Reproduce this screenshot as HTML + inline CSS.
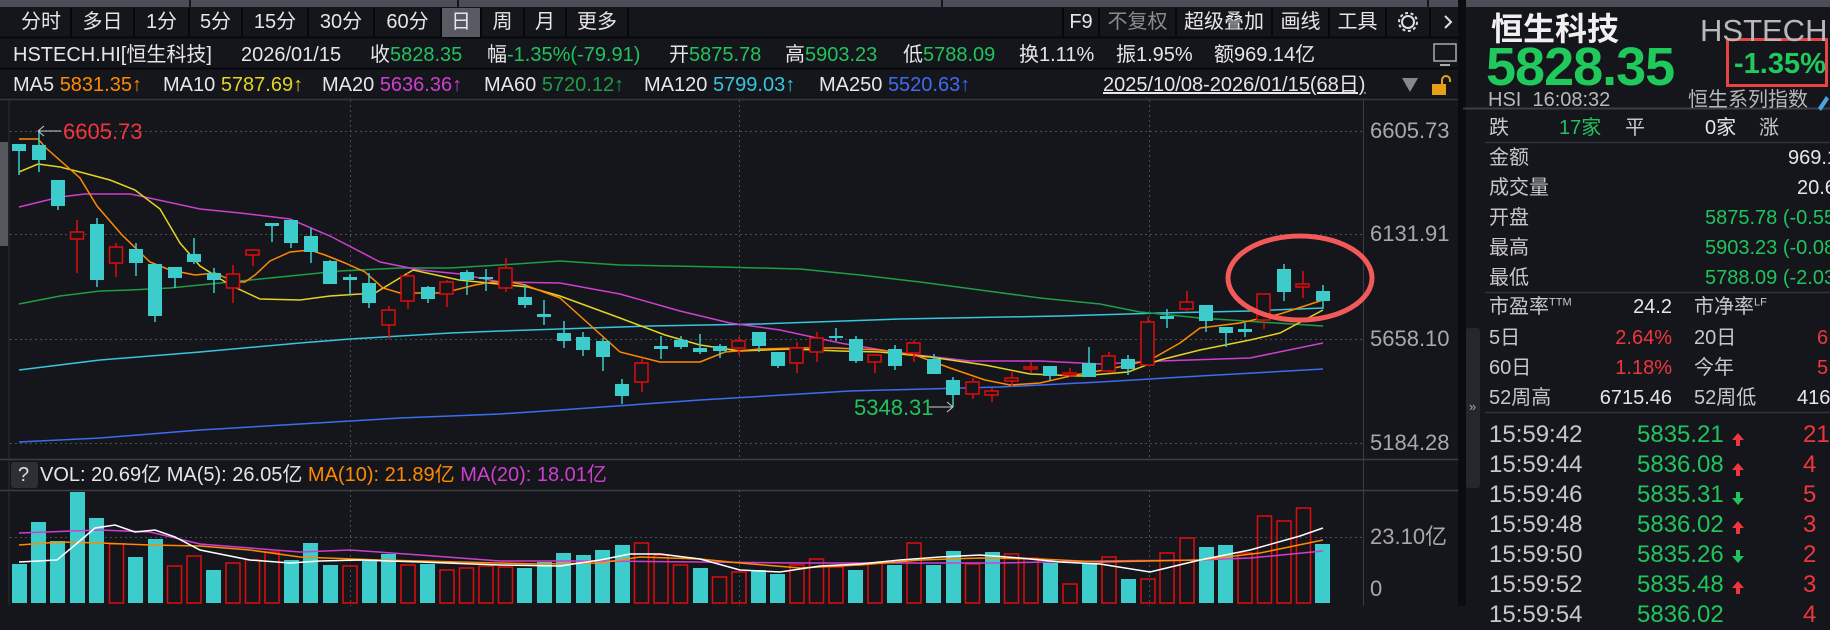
<!DOCTYPE html>
<html><head><meta charset="utf-8">
<style>
*{margin:0;padding:0;box-sizing:border-box}
body{width:1830px;height:606px;overflow:hidden;background:#14161b;font-family:"Liberation Sans","Noto Sans CJK SC",sans-serif;color:#e6e6e6;position:relative}
.a{position:absolute;white-space:nowrap;line-height:1}
.t{font-size:20px;height:20px}
.g{color:#20c35c}.r{color:#f0363c}.o{color:#ff8a00}.y{color:#e3d324}.m{color:#cf3fcf}.gg{color:#1f9e45}.c{color:#38c6de}.b{color:#3f6cf0}.gr{color:#9a9a9a}
.tab{position:absolute;top:8px;height:29px;font-size:20px;line-height:29px;text-align:center;color:#e6e6e6;border-right:2px solid #07080a}
.rp{font-size:20px}
</style></head><body>
<svg width="1830" height="606" style="position:absolute;left:0;top:0">
<rect x="0" y="0" width="1830" height="7" fill="#4b4e56"/>
<path d="M190 0V7M458 0V7M942 0V7M1428 0V7" stroke="#14161b" stroke-width="2"/>
<path d="M0 37.5H1463M0 68.5H1463" stroke="#07080a" stroke-width="2"/>
<path d="M0 99.5H1463" stroke="#34373d" stroke-width="1.5"/>
<path d="M0 459.5H1463M0 490.5H1463" stroke="#3a3d43" stroke-width="1.5"/>
<rect x="0" y="142" width="8" height="104" fill="#55585f"/>
<path d="M9 100V606" stroke="#2a2d33"/>
<path d="M1363.5 100V606" stroke="#3a3d43"/>
<rect x="1458" y="0" width="8" height="606" fill="#0b0c0f"/>
<g stroke="#4a4d54" stroke-dasharray="2,3" stroke-width="1">
<path d="M10 131.5H1363M10 234.5H1363M10 339.5H1363M10 443.5H1363M10 537.5H1363"/>
<path d="M350.5 100V459M739.5 100V459M1149.5 100V459M350.5 490V606M739.5 490V606M1149.5 490V606"/>
</g>
<g fill="none" stroke-width="1.5">
<polyline stroke="#3f6cf0" points="19,442 100,438 200,430 300,424 400,418 500,414 560,410 700,400 850,391 1000,387 1100,382 1200,376 1323,369"/>
<polyline stroke="#38c6de" points="19,370 100,360 200,352 300,343 350,339 400,336 450,333 500,331 560,329 650,326 760,324 900,319 1060,316 1160,313 1250,311 1323,308"/>
<polyline stroke="#1f9e45" points="19,304 60,296 100,291 130,290 170,288 240,281 290,276 340,271 400,268 450,268 500,265 560,261 620,265 720,267 800,269 860,275 920,282 980,290 1040,298 1100,304 1140,312 1200,318 1260,322 1323,326"/>
<polyline stroke="#cf3fcf" points="19,207 60,197 85,194 130,194 140,196 200,209 240,213 290,219 330,236 380,262 420,270 460,274 500,282 560,283 620,294 680,311 730,323 780,330 840,343 900,353 970,361 1040,361 1100,364 1160,361 1250,358 1323,343"/>
<polyline stroke="#e3d324" points="19,172 38,164 60,167 80,172 110,180 135,190 160,209 180,243 200,266 230,285 260,299 300,300 330,296 375,293 413,270 459,280 528,287 560,296 620,318 665,335 700,345 740,351 790,349 840,351 880,352 930,357 985,365 1030,374 1080,376 1128,372 1160,360 1200,350 1250,340 1280,333 1323,310"/>
<polyline stroke="#ff8a00" points="19,139 38,139 46,148 80,178 97,206 122,235 150,262 170,270 195,275 215,273 235,282 245,282 255,275 270,261 290,252 310,250 325,255 345,263 365,272 383,288 400,293 420,293 440,293 455,290 475,285 492,282 510,282 525,285 560,298 620,352 660,362 700,362 725,352 760,349 795,348 835,348 880,350 915,355 950,368 985,380 1010,385 1040,383 1075,375 1110,369 1150,360 1180,343 1200,328 1240,323 1280,314 1323,300"/>
</g>
<path stroke="#3ccccc" stroke-width="1.5" d="M19 144V175M39 131V172M58 180V210M97 218V287M136 243V276M155 264V322M175 267V288M194 238V264M214 268V293M272 223V242M291 220V248M311 228V263M330 260V284M350 274V295M369 273V308M428 286V303M467 270V295M486 269V291M525 284V308M544 300V325M564 321V348M583 332V356M603 338V371M622 379V404M661 336V359M681 336V349M700 334V354M720 344V358M759 332V352M778 352V368M836 328V341M856 336V363M895 345V370M934 354V374M953 377V407M1050 366V380M1089 347V377M1128 355V375M1167 309V328M1206 305V332M1226 327V347M1245 323V337M1284 264V301M1323 285V309"/>
<g fill="#3ccccc">
<rect x="12" y="144" width="14" height="7"/><rect x="32" y="145" width="14" height="15"/><rect x="51" y="180" width="14" height="26"/><rect x="90" y="224" width="14" height="56"/><rect x="129" y="249" width="14" height="14"/><rect x="148" y="264" width="14" height="52"/><rect x="168" y="267" width="14" height="11"/><rect x="187" y="254" width="14" height="8"/><rect x="207" y="273" width="14" height="7"/><rect x="265" y="223" width="14" height="3"/><rect x="284" y="220" width="14" height="23"/><rect x="304" y="236" width="14" height="16"/><rect x="323" y="261" width="14" height="23"/><rect x="343" y="277" width="14" height="3"/><rect x="362" y="283" width="14" height="20"/><rect x="421" y="287" width="14" height="12"/><rect x="460" y="272" width="14" height="8"/><rect x="479" y="277" width="14" height="2"/><rect x="518" y="297" width="14" height="8"/><rect x="537" y="314" width="14" height="3"/><rect x="557" y="333" width="14" height="8"/><rect x="576" y="337" width="14" height="13"/><rect x="596" y="341" width="14" height="16"/><rect x="615" y="384" width="14" height="12"/><rect x="654" y="346" width="14" height="3"/><rect x="674" y="340" width="14" height="7"/><rect x="693" y="348" width="14" height="4"/><rect x="713" y="346" width="14" height="5"/><rect x="752" y="332" width="14" height="14"/><rect x="771" y="352" width="14" height="14"/><rect x="829" y="336" width="14" height="2"/><rect x="849" y="339" width="14" height="22"/><rect x="888" y="349" width="14" height="17"/><rect x="927" y="359" width="14" height="15"/><rect x="946" y="380" width="14" height="15"/><rect x="1043" y="366" width="14" height="10"/><rect x="1082" y="363" width="14" height="14"/><rect x="1121" y="359" width="14" height="10"/><rect x="1160" y="316" width="14" height="3"/><rect x="1199" y="305" width="14" height="16"/><rect x="1219" y="327" width="14" height="6"/><rect x="1238" y="329" width="14" height="3"/><rect x="1277" y="269" width="14" height="23"/><rect x="1316" y="291" width="14" height="10"/>
</g>
<path stroke="#e00c0c" stroke-width="1.5" d="M77 220V273M116 243V277M233 265V303M253 249V266M389 306V339M408 273V309M447 280V307M506 258V292M642 359V392M739 337V355M797 342V373M817 332V362M875 355V373M914 340V362M973 378V399M992 388V402M1012 372V387M1031 362V373M1070 368V377M1109 352V373M1148 317V365M1187 291V311M1264 294V329M1303 271V298"/>
<g fill="#14161b" stroke="#e00c0c" stroke-width="1.5">
<rect x="70.5" y="232" width="13" height="7"/><rect x="109.5" y="247" width="13" height="16"/><rect x="226.5" y="274" width="13" height="14"/><rect x="246" y="250" width="13" height="5"/><rect x="382" y="310" width="13" height="15"/><rect x="401" y="276" width="13" height="25"/><rect x="440" y="282" width="13" height="12"/><rect x="499" y="268" width="13" height="20"/><rect x="635" y="363" width="13" height="19"/><rect x="732" y="341" width="13" height="7"/><rect x="790" y="348" width="13" height="15"/><rect x="810" y="338" width="13" height="14"/><rect x="868" y="355" width="13" height="7"/><rect x="907" y="343" width="13" height="10"/><rect x="966" y="382" width="13" height="12"/><rect x="985" y="391" width="13" height="4"/><rect x="1005" y="378" width="13" height="3"/><rect x="1024" y="367" width="13" height="2"/><rect x="1063" y="373" width="13" height="2"/><rect x="1102" y="356" width="13" height="15"/><rect x="1141" y="322" width="13" height="43"/><rect x="1180" y="302" width="13" height="7"/><rect x="1257" y="294" width="13" height="26"/><rect x="1296" y="284" width="13" height="3"/>
</g>
<ellipse cx="1300" cy="278" rx="72" ry="42" fill="none" stroke="#f25a5a" stroke-width="5"/>
<path d="M38 131H61M38 131l6-5M38 131l6 5" stroke="#ccc" fill="none"/>
<text x="63" y="139" fill="#f0363c" font-size="22" font-family="Liberation Sans">6605.73</text>
<path d="M929 407H953M953 407l-6-5M953 407l-6 5" stroke="#ccc" fill="none"/>
<text x="854" y="415" fill="#20c35c" font-size="22" font-family="Liberation Sans">5348.31</text>
<g fill="#3ccccc">
<rect x="12" y="564" width="15" height="39"/><rect x="31" y="522" width="15" height="81"/><rect x="50" y="541" width="15" height="62"/><rect x="70" y="492" width="15" height="111"/><rect x="89" y="518" width="15" height="85"/><rect x="128" y="557" width="15" height="46"/><rect x="148" y="539" width="15" height="64"/><rect x="206" y="570" width="15" height="33"/><rect x="284" y="560" width="15" height="43"/><rect x="303" y="543" width="15" height="60"/><rect x="323" y="565" width="15" height="38"/><rect x="362" y="561" width="15" height="42"/><rect x="381" y="554" width="15" height="49"/><rect x="420" y="564" width="15" height="39"/><rect x="517" y="568" width="15" height="35"/><rect x="537" y="562" width="15" height="41"/><rect x="556" y="553" width="15" height="50"/><rect x="576" y="555" width="15" height="48"/><rect x="595" y="550" width="15" height="53"/><rect x="615" y="545" width="15" height="58"/><rect x="693" y="568" width="15" height="35"/><rect x="751" y="570" width="15" height="33"/><rect x="770" y="574" width="15" height="29"/><rect x="848" y="570" width="15" height="33"/><rect x="887" y="565" width="15" height="38"/><rect x="926" y="565" width="15" height="38"/><rect x="946" y="551" width="15" height="52"/><rect x="985" y="552" width="15" height="51"/><rect x="1043" y="563" width="15" height="40"/><rect x="1082" y="563" width="15" height="40"/><rect x="1121" y="579" width="15" height="24"/><rect x="1199" y="547" width="15" height="56"/><rect x="1218" y="545" width="15" height="58"/><rect x="1315" y="544" width="15" height="59"/>
</g>
<g fill="none" stroke="#e00c0c" stroke-width="1.5">
<rect x="109.5" y="544" width="14" height="59"/><rect x="167.5" y="566" width="14" height="37"/><rect x="187" y="556" width="14" height="47"/><rect x="226" y="563" width="14" height="40"/><rect x="245.5" y="560" width="14" height="43"/><rect x="265" y="552" width="14" height="51"/><rect x="343" y="566" width="14" height="37"/><rect x="401" y="565" width="14" height="38"/><rect x="440" y="570" width="14" height="33"/><rect x="459.5" y="568" width="14" height="35"/><rect x="479" y="566" width="14" height="37"/><rect x="498.5" y="567" width="14" height="36"/><rect x="634.5" y="543" width="14" height="60"/><rect x="654" y="555" width="14" height="48"/><rect x="673.5" y="565" width="14" height="38"/><rect x="712.5" y="577" width="14" height="26"/><rect x="732" y="572" width="14" height="31"/><rect x="790" y="565" width="14" height="38"/><rect x="809.5" y="559" width="14" height="44"/><rect x="829" y="567" width="14" height="36"/><rect x="868" y="563" width="14" height="40"/><rect x="907" y="543" width="14" height="60"/><rect x="965.5" y="564" width="14" height="39"/><rect x="1004.5" y="554" width="14" height="49"/><rect x="1024" y="558" width="14" height="45"/><rect x="1063" y="584" width="14" height="19"/><rect x="1102" y="557" width="14" height="46"/><rect x="1141" y="579" width="14" height="24"/><rect x="1160" y="553" width="14" height="50"/><rect x="1180" y="538" width="14" height="65"/><rect x="1238" y="553" width="14" height="50"/><rect x="1257.5" y="516" width="14" height="87"/><rect x="1277" y="521" width="14" height="82"/><rect x="1296.5" y="508" width="14" height="95"/>
</g>
<g fill="none" stroke-width="1.5">
<polyline stroke="#cf3fcf" points="19,533 100,530 150,532 200,544 250,548 300,552 350,550 420,555 500,561 600,561 700,562 800,563 900,563 1000,563 1100,561 1200,560 1250,558 1323,551"/>
<polyline stroke="#ff8a00" points="19,545 60,542 100,543 150,545 200,546 250,550 300,557 380,560 460,562 540,564 600,563 640,557 700,559 740,563 800,568 860,565 920,560 980,558 1040,559 1100,562 1200,560 1260,553 1323,540"/>
<polyline stroke="#ffffff" points="19,562 57,560 75,545 95,528 115,525 135,532 155,530 175,537 200,550 250,560 290,563 320,561 360,560 420,562 500,565 560,566 600,560 630,554 660,554 700,559 740,570 780,572 820,566 860,564 900,560 940,557 980,555 1020,558 1060,562 1100,564 1150,572 1200,560 1250,550 1300,536 1323,528"/>
</g>
<rect x="11" y="462" width="27" height="26" rx="3" fill="#2c2f35"/>
<rect x="1466" y="328" width="14" height="160" rx="3" fill="#24272c"/>
<path d="M1463 108.5H1830" stroke="#3a3d43" stroke-width="2"/>
<path d="M1485 142.5H1830M1485 292.5H1830M1485 412.5H1830" stroke="#2f3238" stroke-width="1.5"/>
<rect x="1727.5" y="39.5" width="99" height="46" fill="none" stroke="#e84444" stroke-width="3"/>
<rect x="1434" y="44" width="22" height="17" fill="none" stroke="#aaa" stroke-width="1.5"/><path d="M1440 65H1450" stroke="#aaa" stroke-width="2"/>
<path d="M1402 78H1418L1410 92Z" fill="#888"/>
<rect x="1432" y="84" width="14" height="11" fill="#e8a01a"/><path d="M1442 84v-4a4 4 0 0 1 8 0v2" stroke="#e8a01a" stroke-width="2" fill="none"/>
<circle cx="1408" cy="22" r="6" fill="none" stroke="#ddd" stroke-width="2"/><circle cx="1408" cy="22" r="9" fill="none" stroke="#ddd" stroke-width="2" stroke-dasharray="3,2.6"/>
<path d="M1445 16l6 6-6 6" stroke="#ddd" stroke-width="2" fill="none"/>
<g fill="#f0363c"><path d="M1738 433l-6 7h4v6h4v-6h4z"/><path d="M1738 463l-6 7h4v6h4v-6h4z"/><path d="M1738 521l-6 7h4v6h4v-6h4z"/><path d="M1738 581l-6 7h4v6h4v-6h4z"/></g>
<g fill="#20c35c"><path d="M1738 505l-6-7h4v-6h4v6h4z"/><path d="M1738 563l-6-7h4v-6h4v6h4z"/></g>
<path d="M1818 108l8-12 3 3-8 12z" fill="#4aa3e0"/>
</svg>

<div class="tab" style="left:12px;width:60px">分时</div>
<div class="tab" style="left:72px;width:63px">多日</div>
<div class="tab" style="left:135px;width:55px">1分</div>
<div class="tab" style="left:190px;width:53px">5分</div>
<div class="tab" style="left:243px;width:66px">15分</div>
<div class="tab" style="left:309px;width:66px">30分</div>
<div class="tab" style="left:375px;width:67px">60分</div>
<div class="tab" style="left:442px;width:40px;background:#585b63">日</div>
<div class="tab" style="left:482px;width:43px">周</div>
<div class="tab" style="left:525px;width:42px">月</div>
<div class="tab" style="left:567px;width:62px">更多</div>
<div class="tab" style="left:1062px;width:38px;border-left:2px solid #07080a">F9</div>
<div class="tab" style="left:1100px;width:77px;color:#8a8a8a">不复权</div>
<div class="tab" style="left:1177px;width:96px">超级叠加</div>
<div class="tab" style="left:1273px;width:57px">画线</div>
<div class="tab" style="left:1330px;width:57px">工具</div>
<div class="tab" style="left:1387px;width:44px"></div>

<div class="a t" style="left:13px;top:45px">HSTECH.HI[恒生科技]</div>
<div class="a t" style="left:241px;top:45px">2026/01/15</div>
<div class="a t" style="left:370px;top:45px">收<span class="g">5828.35</span></div>
<div class="a t" style="left:487px;top:45px">幅<span class="g">-1.35%(-79.91)</span></div>
<div class="a t" style="left:669px;top:45px">开<span class="g">5875.78</span></div>
<div class="a t" style="left:785px;top:45px">高<span class="g">5903.23</span></div>
<div class="a t" style="left:903px;top:45px">低<span class="g">5788.09</span></div>
<div class="a t" style="left:1019px;top:45px">换1.11%</div>
<div class="a t" style="left:1116px;top:45px">振1.95%</div>
<div class="a t" style="left:1214px;top:45px">额969.14亿</div>

<div class="a t" style="left:13px;top:75px">MA5 <span class="o">5831.35↑</span></div>
<div class="a t" style="left:163px;top:75px">MA10 <span class="y">5787.69↑</span></div>
<div class="a t" style="left:322px;top:75px">MA20 <span class="m">5636.36↑</span></div>
<div class="a t" style="left:484px;top:75px">MA60 <span class="gg">5720.12↑</span></div>
<div class="a t" style="left:644px;top:75px">MA120 <span class="c">5799.03↑</span></div>
<div class="a t" style="left:819px;top:75px">MA250 <span class="b">5520.63↑</span></div>
<div class="a t" style="left:1103px;top:75px;text-decoration:underline">2025/10/08-2026/01/15(68日)</div>

<div class="a" style="left:1370px;top:120px;font-size:22px;color:#a8a8a8">6605.73</div>
<div class="a" style="left:1370px;top:223px;font-size:22px;color:#a8a8a8">6131.91</div>
<div class="a" style="left:1370px;top:328px;font-size:22px;color:#a8a8a8">5658.10</div>
<div class="a" style="left:1370px;top:432px;font-size:22px;color:#a8a8a8">5184.28</div>
<div class="a" style="left:1370px;top:526px;font-size:22px;color:#a8a8a8">23.10亿</div>
<div class="a" style="left:1370px;top:578px;font-size:22px;color:#a8a8a8">0</div>

<div class="a t" style="left:18px;top:465px;color:#ddd">?</div>
<div class="a t" style="left:40px;top:465px">VOL: 20.69亿 MA(5): 26.05亿 <span class="o">MA(10): 21.89亿</span> <span class="m">MA(20): 18.01亿</span></div>
<div class="a" style="left:1469px;top:400px;font-size:13px;color:#aaa">»</div>

<div class="a" style="left:1491px;top:13px;font-size:32px;font-weight:bold;color:#f0f0f0">恒生科技</div>
<div class="a" style="left:1700px;top:15px;font-size:31px;color:#b8b8b8">HSTECH</div>
<div class="a" style="left:1486px;top:40px;font-size:54px;font-weight:bold;color:#1fc95b;letter-spacing:-1px">5828.35</div>
<div class="a" style="left:1734px;top:50px;font-size:29px;font-weight:bold;color:#1fc95b">-1.35%</div>
<div class="a" style="left:1488px;top:90px;font-size:20px;color:#b8b8b8">HSI&nbsp; 16:08:32</div>
<div class="a" style="left:1688px;top:90px;font-size:20px;color:#b8b8b8">恒生系列指数</div>

<div class="a rp" style="left:1489px;top:118px;color:#c8c8c8">跌</div>
<div class="a rp g" style="left:1559px;top:118px">17家</div>
<div class="a rp" style="left:1625px;top:118px;color:#c8c8c8">平</div>
<div class="a rp" style="left:1705px;top:118px">0家</div>
<div class="a rp" style="left:1759px;top:118px;color:#c8c8c8">涨</div>

<div class="a rp" style="left:1489px;top:148px;color:#c8c8c8">金额</div><div class="a rp" style="left:1788px;top:148px">969.14亿</div>
<div class="a rp" style="left:1489px;top:178px;color:#c8c8c8">成交量</div><div class="a rp" style="left:1797px;top:178px">20.69亿</div>
<div class="a rp" style="left:1489px;top:208px;color:#c8c8c8">开盘</div><div class="a rp g" style="left:1705px;top:208px">5875.78 (-0.55%)</div>
<div class="a rp" style="left:1489px;top:238px;color:#c8c8c8">最高</div><div class="a rp g" style="left:1705px;top:238px">5903.23 (-0.08%)</div>
<div class="a rp" style="left:1489px;top:268px;color:#c8c8c8">最低</div><div class="a rp g" style="left:1705px;top:268px">5788.09 (-2.03%)</div>

<div class="a rp" style="left:1489px;top:297px;color:#c8c8c8">市盈率<sup style="font-size:11px">TTM</sup></div><div class="a rp" style="left:1622px;top:297px;width:50px;text-align:right">24.2</div>
<div class="a rp" style="left:1694px;top:297px;color:#c8c8c8">市净率<sup style="font-size:11px">LF</sup></div>
<div class="a rp" style="left:1489px;top:328px;color:#c8c8c8">5日</div><div class="a rp r" style="left:1572px;top:328px;width:100px;text-align:right">2.64%</div>
<div class="a rp" style="left:1694px;top:328px;color:#c8c8c8">20日</div><div class="a rp r" style="left:1817px;top:328px">6</div>
<div class="a rp" style="left:1489px;top:358px;color:#c8c8c8">60日</div><div class="a rp r" style="left:1572px;top:358px;width:100px;text-align:right">1.18%</div>
<div class="a rp" style="left:1694px;top:358px;color:#c8c8c8">今年</div><div class="a rp r" style="left:1817px;top:358px">5</div>
<div class="a rp" style="left:1489px;top:388px;color:#c8c8c8">52周高</div><div class="a rp" style="left:1572px;top:388px;width:100px;text-align:right">6715.46</div>
<div class="a rp" style="left:1694px;top:388px;color:#c8c8c8">52周低</div><div class="a rp" style="left:1797px;top:388px">416</div>

<div class="a" style="left:1489px;top:420px;font-size:24px;color:#c8c8c8;line-height:30px">15:59:42<br>15:59:44<br>15:59:46<br>15:59:48<br>15:59:50<br>15:59:52<br>15:59:54</div>
<div class="a g" style="left:1637px;top:420px;font-size:24px;line-height:30px">5835.21<br>5836.08<br>5835.31<br>5836.02<br>5835.26<br>5835.48<br>5836.02</div>
<div class="a r" style="left:1803px;top:420px;font-size:24px;line-height:30px">21<br>4<br>5<br>3<br>2<br>3<br>4</div>
</body></html>
